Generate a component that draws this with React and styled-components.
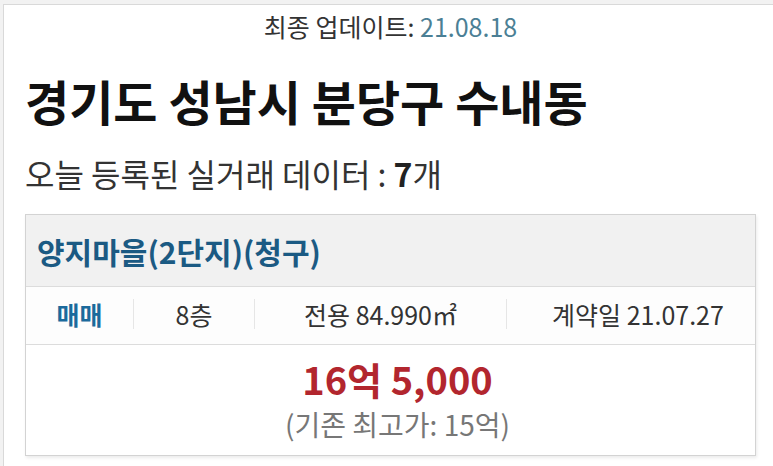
import React from 'react';
import styled, { createGlobalStyle } from 'styled-components';

const GlobalStyle = createGlobalStyle`
  html, body {
    margin: 0;
    padding: 0;
    background: #f2f2f2;
    font-family: "Noto Sans CJK KR", "Noto Sans", sans-serif;
    overflow: hidden;
  }
`;

const Panel = styled.div`
  margin: 4px 0 0 3px;
  width: 800px;
  height: 470px;
  background: #ffffff;
  border-top: 1px solid #d9d9d9;
  border-left: 1px solid #d9d9d9;
  padding-left: 21px;
  box-sizing: border-box;
`;

const Updated = styled.div`
  width: 731px;
  text-align: center;
  font-size: 25px;
  line-height: 28px;
  padding-top: 7px;
  color: #333;
`;

const DateText = styled.span`
  color: #4b7f95;
`;

const Title = styled.h1`
  margin: 31px 0 0;
  font-size: 48px;
  line-height: 58px;
  font-weight: 700;
  color: #111;
`;

const Summary = styled.p`
  margin: 24px 0 0;
  font-size: 32px;
  line-height: 40px;
  color: #333;
`;

const Count = styled.b`
  font-weight: 700;
  color: #222;
`;

const Card = styled.div`
  margin-top: 21px;
  width: 731px;
  border: 1px solid #d3d3d3;
  box-shadow: 1px 2px 3px rgba(0, 0, 0, 0.08);
  box-sizing: border-box;
`;

const CardHeader = styled.div`
  height: 71px;
  display: flex;
  align-items: center;
  padding-left: 11px;
  background: #f1f1f1;
  border-bottom: 1px solid #dcdcdc;
  font-size: 30px;
  font-weight: 700;
  color: #1b5a83;
`;

const InfoRow = styled.div`
  display: grid;
  grid-template-columns: 107px 121px 252px 1fr;
  padding: 12px 0 15px;
  background: #fdfdfd;
  border-bottom: 1px solid #dcdcdc;
`;

const InfoCell = styled.div`
  height: 30px;
  display: flex;
  align-items: center;
  justify-content: center;
  font-size: 25px;
  color: ${(p) => (p.$accent ? '#1b6a9c' : '#333')};
  font-weight: ${(p) => (p.$accent ? 700 : 400)};
  border-left: ${(p) => (p.$first ? 'none' : '1px solid #e6e6e6')};
  padding-left: ${(p) => p.$shift || 0}px;
`;

const PriceBox = styled.div`
  height: 110px;
  display: flex;
  flex-direction: column;
  align-items: center;
  padding-left: 14px;
  padding-top: 11px;
  box-sizing: border-box;
  background: #fff;
`;

const Price = styled.div`
  font-size: 38px;
  line-height: 46px;
  font-weight: 700;
  color: #b2262e;
`;

const Previous = styled.div`
  margin-top: 4px;
  font-size: 28px;
  line-height: 36px;
  color: #777;
`;

export default function App() {
  return (
    <>
      <GlobalStyle />
      <Panel>
        <Updated>
          최종 업데이트: <DateText>21.08.18</DateText>
        </Updated>
        <Title>경기도 성남시 분당구 수내동</Title>
        <Summary>
          오늘 등록된 실거래 데이터 : <Count>7</Count>개
        </Summary>
        <Card>
          <CardHeader>양지마을(2단지)(청구)</CardHeader>
          <InfoRow>
            <InfoCell $first $accent>매매</InfoCell>
            <InfoCell>8층</InfoCell>
            <InfoCell>전용 84.990㎡</InfoCell>
            <InfoCell $shift={14}>계약일 21.07.27</InfoCell>
          </InfoRow>
          <PriceBox>
            <Price>16억 5,000</Price>
            <Previous>(기존 최고가: 15억)</Previous>
          </PriceBox>
        </Card>
      </Panel>
    </>
  );
}
